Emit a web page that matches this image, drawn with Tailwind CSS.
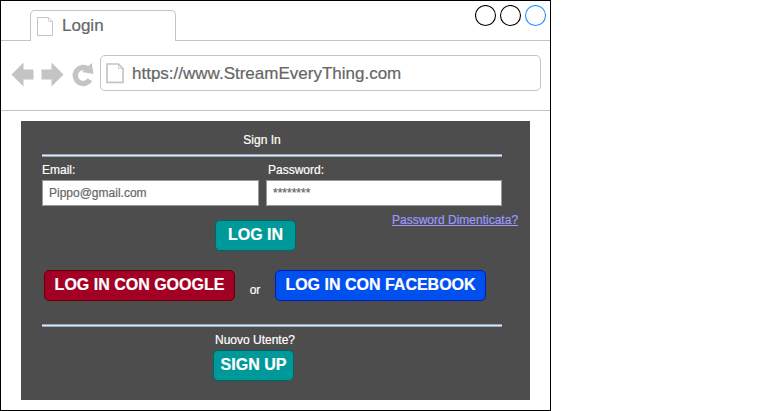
<!DOCTYPE html>
<html lang="it">
<head>
<meta charset="utf-8">
<title>Login</title>
<script src="https://cdn.jsdelivr.net/npm/@tailwindcss/browser@4"></script>
</head>
<body class="bg-white font-['Liberation_Sans',Arial,sans-serif]">
<div class="flex h-[411px] w-[551px] flex-col border border-black bg-white text-[#666] [-webkit-text-stroke:0.2px]">
  <!-- Tab strip -->
  <header class="flex h-10 shrink-0 items-end">
    <div class="h-px w-[29px] bg-[#c4c4c4]"></div>
    <div class="flex h-[31px] w-[146px] rounded-t-[5px] border border-b-0 border-[#c4c4c4] pt-[6px] pl-[6px]">
      <svg class="h-[20px] w-[17px] shrink-0" viewBox="0 0 17 20" fill="none" stroke="#c4c4c4"><path d="M.5.5h11l4 4v14H.5z"/><path d="M11.5.5v4h4" stroke-width=".7"/></svg>
      <span class="ml-2 -mt-px text-[17px] leading-5">Login</span>
    </div>
    <div class="flex h-full grow justify-end border-b border-[#c4c4c4] pt-1 pr-[3px]">
      <svg class="h-[22px] w-[72px]" viewBox="0 0 72 22" fill="none" stroke-width="1.1"><circle cx="10.5" cy="10.5" r="10" stroke="#000"/><circle cx="35.5" cy="10.5" r="10" stroke="#000"/><circle cx="60.5" cy="10.5" r="10" stroke="#1e90ff"/></svg>
    </div>
  </header>
  <!-- Toolbar -->
  <nav class="flex h-[70px] shrink-0 border-b border-[#c4c4c4] pt-[14px] pl-[10px]">
    <svg class="mt-[6px] h-[28px] w-[84px] shrink-0" viewBox="11 61 84 28" fill="#c4c4c4"><path d="M11.500 74.500l12-12v7h10v10h-10v7zM63.500 74.500l-12-12v7h-10v10h10v7z"/><path d="M90 79.800A8 8 0 1 1 87.500 68.700" fill="none" stroke="#c4c4c4" stroke-width="5.400"/><path d="M91.700 63l1.800 11-11.500-2z"/></svg>
    <div class="ml-[5px] flex h-[36px] w-[441px] rounded-[5px] border border-[#c4c4c4] pt-[8px] pl-[5px]">
      <svg class="-mt-px h-[21px] w-[18px] shrink-0" viewBox="0 0 18 21" fill="none" stroke="#c4c4c4" stroke-width="1.700"><path d="M1 1h11.500l4.500 4.500v13.800H1z"/><path d="M12.500 1v4.500H17" stroke-width=".8"/></svg>
      <span class="ml-[8px] text-[17px] leading-5">https://www.StreamEveryThing.com</span>
    </div>
  </nav>
  <main class="mt-[10px] ml-5 flex h-[279px] w-[509px] flex-col bg-[#4d4d4d] pl-[21px] text-[12px] leading-[14px] text-white">
    <h1 class="mt-3 w-[440px] text-center">Sign In</h1>
    <div class="mt-[7px] h-[3px] w-[460px] border-y border-[#98a7b5] bg-[#dae8fc]"></div>
    <div class="mt-[6px] flex gap-[7px]">
      <label class="w-[217px]">Email:
        <span class="mt-[3px] flex h-[26px] w-[217px] items-center border border-[#999] bg-white pl-[6px] text-[#666]">Pippo@gmail.com</span>
      </label>
      <label class="w-[236px]"><span class="pl-[2px]">Password:</span>
        <span class="mt-[3px] flex h-[26px] w-[236px] items-center border border-[#999] bg-white pl-[6px] text-[#666]">********</span>
      </label>
    </div>
    <div class="flex h-[64px] pl-[173px]">
      <button class="mt-[14px] h-[31px] w-[81px] rounded-[5px] border border-[#006666] bg-[#009999] pb-[2px] text-[16px] leading-none font-bold">LOG IN</button>
      <a class="mt-[7px] ml-[96px] h-[14px] whitespace-nowrap text-[#9999ff] underline">Password Dimenticata?</a>
    </div>
    <div class="flex pl-[2px]">
      <button class="h-[31px] w-[191px] rounded-[5px] border border-[#660000] bg-[#a20025] pb-[2px] text-[16px] leading-none font-bold whitespace-nowrap">LOG IN CON GOOGLE</button>
      <span class="mt-[13px] w-10 text-center">or</span>
      <button class="h-[31px] w-[211px] rounded-[5px] border border-[#001dbc] bg-[#0050ef] pb-[2px] text-[16px] leading-none font-bold whitespace-nowrap">LOG IN CON FACEBOOK</button>
    </div>
    <div class="mt-[23px] h-[3px] w-[460px] border-y border-[#98a7b5] bg-[#dae8fc]"></div>
    <p class="mt-[6px] w-[426px] text-center">Nuovo Utente?</p>
    <button class="mt-[3px] ml-[171px] h-[31px] w-[81px] rounded-[5px] border border-[#006666] bg-[#009999] pb-[2px] text-[16px] leading-none font-bold">SIGN UP</button>
  </main>
</div>
</body>
</html>
